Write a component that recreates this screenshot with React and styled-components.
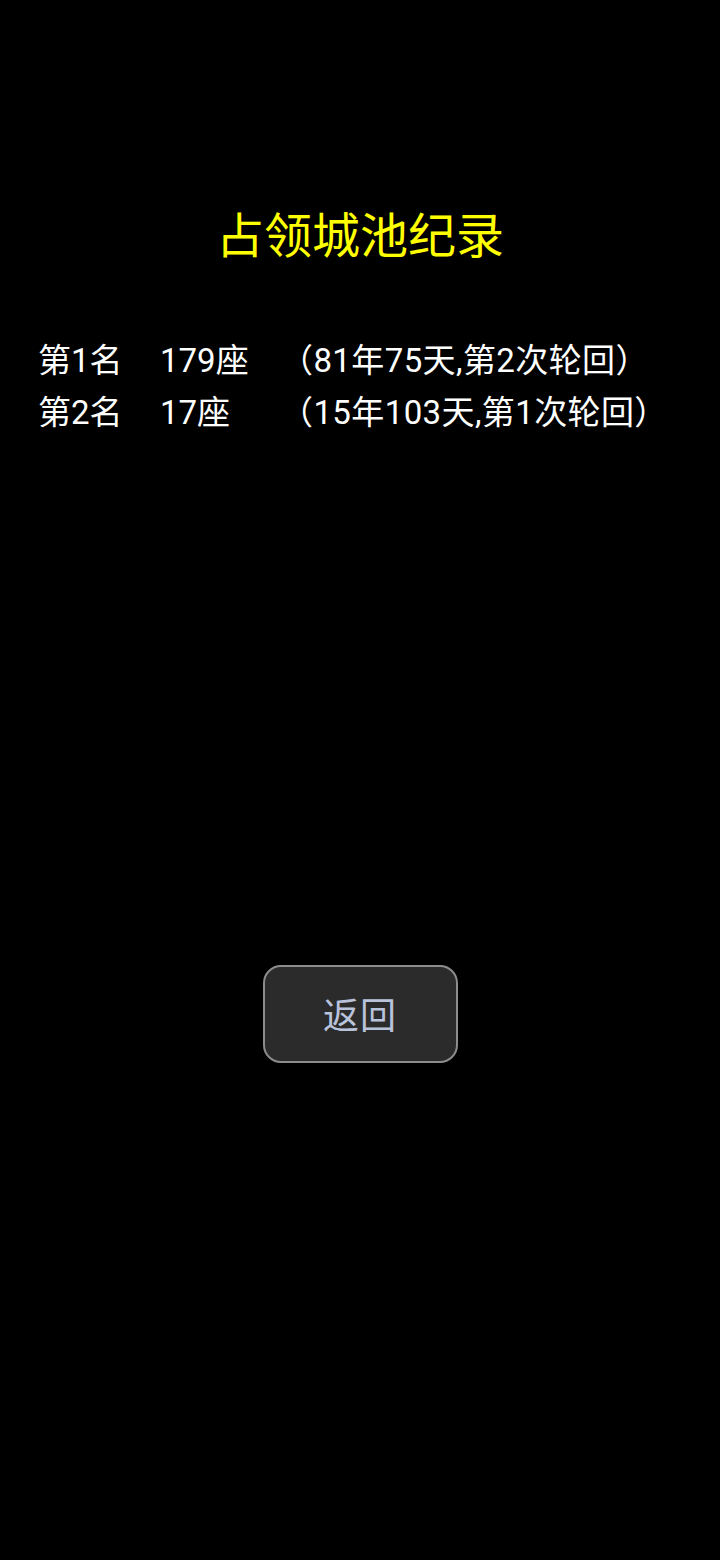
import React from "react";
import styled, { createGlobalStyle } from "styled-components";

const Global = createGlobalStyle`
  html, body {
    margin: 0;
    padding: 0;
    background: #000000;
  }
  body {
    font-family: Roboto, "Noto Sans CJK SC", sans-serif;
  }
`;

const Page = styled.div`
  width: 720px;
  height: 1560px;
  background: #000000;
  display: flex;
  flex-direction: column;
  align-items: center;
`;

const Title = styled.div`
  margin-top: 205px;
  font-size: 48px;
  line-height: 64px;
  color: #ffff00;
  text-align: center;
`;

const RecordList = styled.div`
  align-self: stretch;
  margin-top: 66px;
  padding-left: 38px;
  display: flex;
  flex-direction: column;
`;

const Row = styled.div`
  display: flex;
  font-size: 33px;
  line-height: 52px;
  color: #ffffff;
  white-space: nowrap;
`;

const Cell = styled.span`
  width: ${(p) => p.w}px;
  flex: none;
`;

const Detail = styled.span`
  letter-spacing: 0.4px;
`;

const BackButton = styled.button`
  margin-top: 526px;
  width: 195px;
  height: 98px;
  padding-bottom: 4px;
  border: 2px solid #8c8c8c;
  border-radius: 18px;
  background: #2b2b2b;
  color: #b9c3dc;
  font-family: Roboto, "Noto Sans CJK SC", sans-serif;
  font-size: 36px;
  letter-spacing: 1px;
  cursor: pointer;
`;

const records = [
  { rank: "第1名", count: "179座", detail: "（81年75天,第2次轮回）" },
  { rank: "第2名", count: "17座", detail: "（15年103天,第1次轮回）" },
];

export default function App() {
  return (
    <Page>
      <Global />
      <Title>占领城池纪录</Title>
      <RecordList>
        {records.map((r) => (
          <Row key={r.rank}>
            <Cell w={122}>{r.rank}</Cell>
            <Cell w={120}>{r.count}</Cell>
            <Detail>{r.detail}</Detail>
          </Row>
        ))}
      </RecordList>
      <BackButton>返回</BackButton>
    </Page>
  );
}
